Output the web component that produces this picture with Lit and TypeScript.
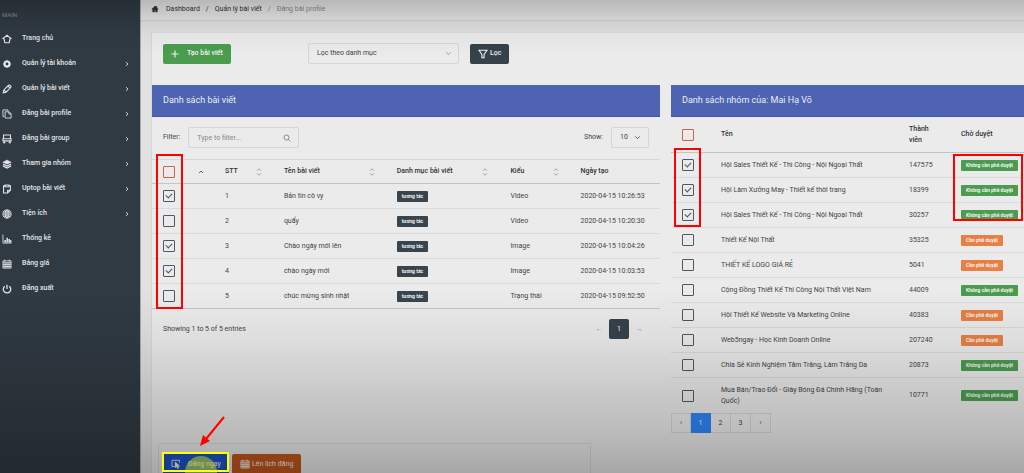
import { LitElement, html, svg, css, nothing } from "lit";
import { customElement, property } from "lit/decorators.js";
import { classMap } from "lit/directives/class-map.js";

const icons: Record<string, unknown> = {
  home: svg`<path d="M.8 7.800 8 2l7.200 5.800M3 6.500l1.500 7.500h7L13 6.500" stroke-width="1.900" />`,
  homeSolid: svg`<path fill="currentColor" d="M8 2 1.500 8.500h2V14h3.300v-4h2.400v4h3.300V8.500h2L12 5.800V3h-1.600v1.300z" stroke-width="1" />`,
  gear: svg`<circle cx="8" cy="8" r="4" stroke-width="3.400" /><path d="M8 1.500v2M8 12.500v2M1.500 8h2M12.500 8h2M3.500 3.500l1 1M11.500 11.500l1 1M3.500 12.500l1-1M11.500 4.500l1-1" />`,
  pencil: svg`<path stroke-width="1.800" d="M2 14l1-4.500L10.500 2q1-.8 2 0l1.500 1.500q.8 1 0 2L6.500 13zM3 9.500 6.500 13M9.500 3l3.500 3.500" />`,
  copy: svg`<path d="M3.500 12H1.500V1.500h8v2M5 4.500h6.500l3 3v7H5zM11 4.500V8h3.500" />`,
  group: svg`<path stroke-width="1.700" d="M2.500 1.500h11v6h-11zM1.500 7.500V11h13V7.500zM3.500 11v3M12.500 11v3M1.500 14h4M10.500 14h4" />`,
  layers: svg`<path fill="currentColor" d="M8 1.500 15 5 8 8.500 1 5z" stroke-width=".5" /><path stroke-width="2" d="M1.500 8 8 11.300 14.500 8M1.500 11 8 14.300 14.500 11" />`,
  clipboard: svg`<path stroke-width="1.700" d="M5 3H2.500v11.500H9l4.500-4.500V3H11M5 1.500h6v3H5zM9 14.500V10h4.500" />`,
  globe: svg`<circle cx="8" cy="8" r="6.500" /><ellipse cx="8" cy="8" rx="3" ry="6.500" /><path d="M1.500 8h13M2.500 4.800h11M2.500 11.200h11M8 1.500v13" />`,
  chart: svg`<path d="M1.500 1v13.500H15" /><path stroke-width="2.400" d="M5 13.500V9.500M8.300 13.500V6M11.500 13.500V8M14 13.500V10" />`,
  calendar: svg`<path d="M1.500 3h13v11.500h-13zM1.500 6h13M4.800 6v8M8 6v8M11.200 6v8M1.500 9h13M1.500 12h13M4.500 1v3M11.500 1v3" />`,
  power: svg`<path stroke-width="2" d="M4.500 3.500a6 6 0 1 0 7 0M8 1v7" />`,
  plus: svg`<path stroke-width="2.200" d="M8 1v14M1 8h14" />`,
  filter: svg`<path stroke-width="1.700" d="M1.500 2h13L9.700 8.500V14H6.300V8.500z" />`,
  search: svg`<circle cx="7" cy="7" r="5" /><path d="M10.700 10.700 15 15" />`,
  down: svg`<path stroke-width="1.800" d="M3 5.500 8 10.500l5-5" />`,
  right: svg`<path stroke-width="2.400" d="M5.500 3l5 5-5 5" />`,
  up: svg`<path d="M3 10.500 8 5.500l5 5" stroke-width="2.400" />`,
  sort: svg`<path d="M4 5.500 8 1.500l4 4M4 10.500l4 4 4-4" />`,
  click: svg`<path d="M6 12H1.500V2h12v4" /><path fill="currentColor" d="M6.500 4.500v9.500l2.500-2 1.500 3.500 2-1-1.500-3.200h3z" stroke-width=".8" />`,
};

@customElement("ui-icon")
class UiIcon extends LitElement {
  @property() name = "";
  static styles = css`
    :host { display: inline-flex; flex: none; width: 10px; height: 10px; }
    svg { width: 100%; height: 100%; fill: none; stroke: currentColor; stroke-width: 1.4; }
  `;
  render() {
    return html`<svg viewBox="0 0 16 16" aria-hidden="true">${icons[this.name]}</svg>`;
  }
}

const menu: [string, string, boolean][] = [
  ["home", "Trang chủ", false],
  ["gear", "Quản lý tài khoản", true],
  ["pencil", "Quản lý bài viết", true],
  ["copy", "Đăng bài profile", true],
  ["group", "Đăng bài group", true],
  ["layers", "Tham gia nhóm", true],
  ["clipboard", "Uptop bài viết", true],
  ["globe", "Tiện ích", true],
  ["chart", "Thống kê", false],
  ["calendar", "Bảng giá", false],
  ["power", "Đăng xuất", false],
];

const posts = [
  { on: true, name: "Bản tin cô vy", kind: "Video", date: "2020-04-15 10:26:53" },
  { on: false, name: "quẩy", kind: "Video", date: "2020-04-15 10:20:30" },
  { on: true, name: "Chào ngày mới lên", kind: "Image", date: "2020-04-15 10:04:26" },
  { on: true, name: "chào ngày mới", kind: "Image", date: "2020-04-15 10:03:53" },
  { on: false, name: "chúc mừng sinh nhật", kind: "Trạng thái", date: "2020-04-15 09:52:50" },
];

const groups = [
  { on: true, name: "Hội Sales Thiết Kế - Thi Công - Nội Ngoại Thất", members: 147575, open: true },
  { on: true, name: "Hội Làm Xưởng May - Thiết kế thời trang", members: 18399, open: true },
  { on: true, name: "Hội Sales Thiết Kế - Thi Công - Nội Ngoại Thất", members: 30257, open: true },
  { on: false, name: "Thiết Kế Nội Thất", members: 35325, open: false },
  { on: false, name: "THIẾT KẾ LOGO GIÁ RẺ", members: 5041, open: false },
  { on: false, name: "Cộng Đồng Thiết Kế Thi Công Nội Thất Việt Nam", members: 44009, open: true },
  { on: false, name: "Hội Thiết Kế Website Và Marketing Online", members: 40383, open: false },
  { on: false, name: "Web5ngay - Học Kinh Doanh Online", members: 207240, open: false },
  { on: false, name: "Chia Sẻ Kinh Nghiệm Tắm Trắng, Làm Trắng Da", members: 20873, open: true },
  { on: false, name: "Mua Bán/Trao Đổi - Giày Bóng Đá Chính Hãng (Toàn Quốc)", members: 10771, open: true },
];

@customElement("app-root")
class AppRoot extends LitElement {
  static styles = css`
    :host {
      display: grid;
      grid-template-columns: 141px minmax(0, 1fr);
      position: relative;
      height: 100vh;
      overflow: hidden;
      box-sizing: border-box;
      background: #e1e1e1;
      color: #444;
      font: 400 7px/11px Roboto, "Noto Sans", sans-serif;
    }
    *, *::before, *::after { box-sizing: border-box; }
    button, input, select { font: inherit; color: inherit; margin: 0; }
    a { color: inherit; text-decoration: none; }

    .sidebar { background: #303a42; color: #e4e6e8; border-right: 1px solid #a9adaf; padding-top: 4px; }
    .caption { color: #858c92; font-size: 6px; line-height: 22px; margin: 0; padding-left: 2px; }
    .menu { list-style: none; margin: 0; padding: 0; }
    .menu a { display: flex; align-items: center; gap: 10px; height: 25px; padding: 0 10px 0 2px; font-weight: 500; }
    .menu span { flex: 1; }
    .menu .caret { width: 6px; height: 6px; }

    .crumbs { display: flex; align-items: center; gap: 6px; height: 21px; padding: 0 10px 2px; border-bottom: 1px solid #d0d0d0; background: #e6e6e6; color: #333; }
    .crumbs a { display: flex; align-items: center; gap: 7px; }
    .crumbs ui-icon { width: 8px; height: 8px; }
    .crumbs .here { color: #888; }

    .card { margin: 11px 0 0 11px; background: #ebebeb; border-top: 1px solid #dcdcdc; min-height: 100vh; box-shadow: -1px 0 #d8d8d8; }
    .toolbar { display: flex; align-items: center; gap: 11px; padding: 10px 11px 21px; }
    .toolbar .slot { width: 134px; }
    .btn { display: inline-flex; align-items: center; justify-content: center; height: 20px; padding: 0 8px; border: 0; border-radius: 2px; color: #f2f2f2; white-space: nowrap; gap: 2px; }
    .btn.green { background: #4b9c4f; gap: 8px; font-weight: 500; }
    .btn.green ui-icon { width: 8px; height: 8px; }
    .btn.dark { background: #36424a; font-weight: 500; }
    .btn.blue { background: #1b54c8; padding: 0 8px; gap: 7px; }
    .btn.orange { background: #c2571b; }
    .pick { position: relative; display: block; }
    .pick select { display: block; appearance: none; width: 100%; height: 21px; border: 1px solid #d6d6d6; border-radius: 2px; background: transparent; padding: 0 8px; outline: 0; }
    .pick ui-icon { position: absolute; right: 7px; top: 7px; width: 7px; height: 7px; pointer-events: none; color: #888; }
    .category { width: 151px; }
    .length { width: 38px; }
    .length ui-icon { color: #333; right: 8px; }

    .columns { display: grid; grid-template-columns: minmax(0, 59fr) minmax(0, 41fr); gap: 11px; }
    .title { margin: 0; padding: 0 11px; background: #4e63b1; color: #eceef6; font-size: 9px; font-weight: 400; line-height: 31px; border-bottom: 1px solid #4456a0; }
    .controls { display: flex; align-items: center; gap: 8px; padding: 10px 11px 11px; }
    .controls .show { margin-left: auto; }
    .search { position: relative; width: 111px; }
    .search input { display: block; width: 100%; height: 21px; border: 1px solid #d6d6d6; border-radius: 2px; background: transparent; padding: 0 20px 0 8px; outline: 0; }
    .search input::placeholder { color: #888; opacity: 1; }
    .search ui-icon { position: absolute; right: 8px; top: 7px; width: 8px; height: 8px; color: #666; }

    table { width: 100%; border-collapse: separate; border-spacing: 0; table-layout: fixed; }
    th, td { height: 25px; padding: 0 0 0 11px; text-align: left; vertical-align: middle; border-bottom: 1px solid #dadada; }
    th { font-weight: 500; color: #333; border-bottom-color: #c4c4c4; }
    .posts th { border-top: 1px solid #d6d6d6; }
    .posts tr:last-child td { border-bottom-color: #c4c4c4; }
    .posts .c1 { width: 12.2%; }
    .posts .c2 { width: 11.6%; }
    .posts .c3 { width: 22.2%; }
    .posts .c4 { width: 22.4%; }
    .posts .c5 { width: 13.8%; }
    .head { display: flex; align-items: center; justify-content: space-between; padding-right: 10px; }
    .head ui-icon { width: 8px; height: 8px; color: #888; }
    .head ui-icon[name="up"] { width: 6px; height: 6px; color: #444; }
    .groups .c1 { width: 39px; }
    .groups .c3 { width: 52px; }
    .groups .c4 { width: 74px; }
    .groups th { height: 36px; }
    .groups .c3 { padding-right: 10px; }
    .groups tbody tr:last-child td { height: 35px; border: 0; }
    .groups tr td:nth-child(2) { padding-right: 8px; }

    .check { appearance: none; display: block; position: relative; width: 12px; height: 12px; border: 1px solid #4c5863; border-radius: 1px; background: transparent; }
    .check:checked::after { content: ""; position: absolute; left: 2px; top: 2px; width: 6px; height: 4px; border: solid #4c5863; border-width: 0 0 1px 1px; transform: rotate(-45deg); }
    .check.all { border-color: #d0604e; }
    .badge { display: block; width: max-content; padding: 0 5px; border-radius: 1px; background: #39454e; color: #f2f2f2; font-size: 5px; font-weight: 700; line-height: 11px; white-space: nowrap; }
    .badge.open { background: #4b9c4f; }
    .badge.wait { background: #e88043; }

    .summary { display: flex; align-items: center; justify-content: space-between; padding: 10px 11px; }
    .pager { display: flex; align-items: center; }
    .pager button { width: 20px; height: 20px; padding: 0; border: 0; background: none; color: #888; }
    .pager .current { background: #36424a; color: #f2f2f2; border-radius: 2px; }
    .pager.joined button { border: 1px solid #d4d4d4; border-left-width: 0; color: #444; }
    .pager.joined button:first-child { border-left-width: 1px; }
    .pager.joined .current { background: #2e86f7; border-color: #2e86f7; border-radius: 0; color: #f2f2f2; }

    .actions { display: flex; gap: 3px; width: calc(50% - 3px); margin: 10px 0 0 6px; padding: 10px 4px; border: 1px solid #d9d9d9; border-radius: 2px; }

    .shade { position: absolute; inset: 0; pointer-events: none; background: linear-gradient(rgba(0,0,0,.2), rgba(0,0,0,.09) 4%, rgba(0,0,0,.03) 7%, transparent 12%, transparent 61%, rgba(0,0,0,.06) 72%, rgba(0,0,0,.13) 81%, rgba(0,0,0,.2) 91%, rgba(0,0,0,.29)); }
    .marks { position: absolute; left: 0; top: 0; width: 1024px; height: 473px; pointer-events: none; fill: none; stroke: #f00; stroke-width: 2; }
    .marks .spot { fill: #c8d820; fill-opacity: .5; stroke: none; }
    .marks .focus { stroke: #ff0; }
    .marks .tip { fill: #f00; stroke: none; }
  `;

  private check(on: boolean, label: string, all = false) {
    return html`<input type="checkbox" class=${classMap({ check: true, all })} aria-label=${label} .checked=${on} />`;
  }

  private head(cls: string, text: string, icon = "sort") {
    return html`<th class=${cls}><div class="head">${text}<ui-icon name=${icon}></ui-icon></div></th>`;
  }

  private posts() {
    return html`<section>
      <h2 class="title">Danh sách bài viết</h2>
      <div class="controls">
        <label for="filter">Filter:</label>
        <div class="search">
          <input id="filter" type="text" placeholder="Type to filter..." />
          <ui-icon name="search"></ui-icon>
        </div>
        <label class="show" for="length">Show:</label>
        <div class="pick length">
          <select id="length"><option>10</option></select>
          <ui-icon name="down"></ui-icon>
        </div>
      </div>
      <table class="posts">
        <thead>
          <tr>
            <th class="c1"><div class="head">${this.check(false, "Chọn tất cả bài viết", true)}<ui-icon name="up"></ui-icon></div></th>
            ${this.head("c2", "STT")}${this.head("c3", "Tên bài viết")}${this.head("c4", "Danh mục bài viết")}${this.head("c5", "Kiểu")}
            <th>Ngày tạo</th>
          </tr>
        </thead>
        <tbody>
          ${posts.map((p, i) => html`<tr>
            <td>${this.check(p.on, p.name)}</td>
            <td>${i + 1}</td>
            <td>${p.name}</td>
            <td><span class="badge">tương tác</span></td>
            <td>${p.kind}</td>
            <td>${p.date}</td>
          </tr>`)}
        </tbody>
      </table>
      <div class="summary">
        <span>Showing 1 to 5 of 5 entries</span>
        <nav class="pager"><button>←</button><button class="current">1</button><button>→</button></nav>
      </div>
    </section>`;
  }

  private groups() {
    return html`<section>
      <h2 class="title">Danh sách nhóm của: Mai Hạ Võ</h2>
      <table class="groups">
        <thead>
          <tr>
            <th class="c1">${this.check(false, "Chọn tất cả nhóm", true)}</th>
            <th>Tên</th>
            <th class="c3">Thành viên</th>
            <th class="c4">Chờ duyệt</th>
          </tr>
        </thead>
        <tbody>
          ${groups.map((g) => html`<tr>
            <td>${this.check(g.on, g.name)}</td>
            <td>${g.name}</td>
            <td>${g.members}</td>
            <td><span class=${classMap({ badge: true, open: g.open, wait: !g.open })}>${g.open ? "Không cần phê duyệt" : "Cần phê duyệt"}</span></td>
          </tr>`)}
        </tbody>
      </table>
      <nav class="pager joined">
        <button>‹</button><button class="current">1</button><button>2</button><button>3</button><button>›</button>
      </nav>
    </section>`;
  }

  render() {
    return html`
      <aside class="sidebar">
        <p class="caption">MAIN</p>
        <ul class="menu">
          ${menu.map(([icon, text, more]) => html`<li><a href="#"><ui-icon name=${icon}></ui-icon><span>${text}</span>${more ? html`<ui-icon class="caret" name="right"></ui-icon>` : nothing}</a></li>`)}
        </ul>
      </aside>
      <main>
        <nav class="crumbs">
          <a href="#"><ui-icon name="homeSolid"></ui-icon>Dashboard</a><span>/</span><a href="#">Quản lý bài viết</a><span class="here">/</span><span class="here">Đăng bài profile</span>
        </nav>
        <div class="card">
          <div class="toolbar">
            <div class="slot"><button class="btn green"><ui-icon name="plus"></ui-icon>Tạo bài viết</button></div>
            <div class="pick category">
              <select aria-label="Danh mục"><option>Lọc theo danh mục</option></select>
              <ui-icon name="down"></ui-icon>
            </div>
            <button class="btn dark"><ui-icon name="filter"></ui-icon>Lọc</button>
          </div>
          <div class="columns">${this.posts()}${this.groups()}</div>
          <div class="actions">
            <button class="btn blue"><ui-icon name="click"></ui-icon>Đăng ngay</button>
            <button class="btn orange"><ui-icon name="calendar"></ui-icon>Lên lịch đăng</button>
          </div>
        </div>
      </main>
      <div class="shade"></div>
      <svg class="marks" viewBox="0 0 1024 473" aria-hidden="true">
        <circle class="spot" cx="201" cy="472" r="16" />
        <rect x="157" y="155" width="25" height="153" />
        <rect x="675" y="149" width="25" height="77" />
        <rect x="954" y="155" width="68" height="65" />
        <rect class="focus" x="163" y="453" width="65" height="18" />
        <path d="M224 417 206 439" />
        <path class="tip" d="M200 446 203 435 210 441z" />
      </svg>
    `;
  }
}
